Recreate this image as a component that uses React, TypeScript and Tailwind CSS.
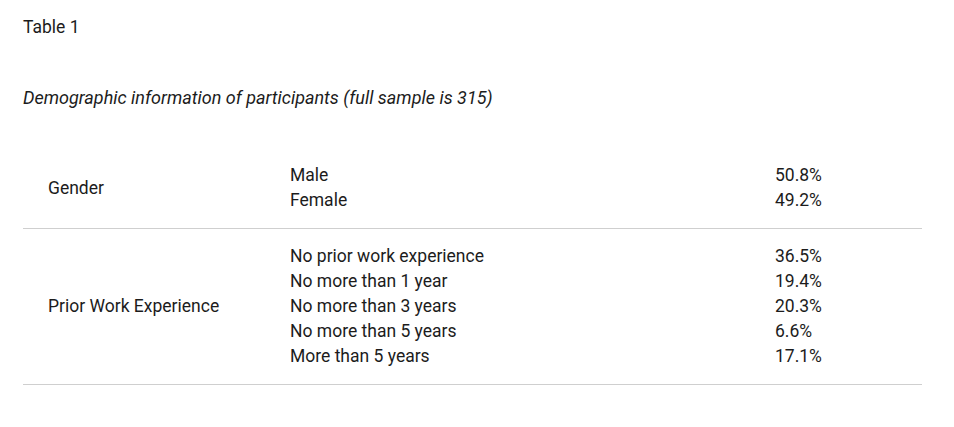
const rows = [
  {
    label: 'Gender',
    items: [
      ['Male', '50.8%'],
      ['Female', '49.2%'],
    ],
  },
  {
    label: 'Prior Work Experience',
    items: [
      ['No prior work experience', '36.5%'],
      ['No more than 1 year', '19.4%'],
      ['No more than 3 years', '20.3%'],
      ['No more than 5 years', '6.6%'],
      ['More than 5 years', '17.1%'],
    ],
  },
];

export default function App() {
  return (
    <div className="min-h-screen bg-white text-[17.5px] leading-[25px] text-[#1c1c1c] font-['Roboto',sans-serif]">
      <div className="w-[899px] ml-[23px] pt-[15px]">
        <p>Table 1</p>
        <p className="mt-[45px] italic text-[18px]">Demographic information of participants (full sample is 315)</p>

        <div className="mt-[38px]">
          {rows.map((row) => (
            <div
              key={row.label}
              className="grid grid-cols-[242px_485px_1fr] py-[15px] border-b border-[#cfcfcf]"
            >
              <div className="pl-[25px] flex items-center">{row.label}</div>
              <div className="pl-[25px]">
                {row.items.map(([name]) => (
                  <div key={name}>{name}</div>
                ))}
              </div>
              <div className="pl-[25px]">
                {row.items.map(([name, pct]) => (
                  <div key={name}>{pct}</div>
                ))}
              </div>
            </div>
          ))}
        </div>
      </div>
    </div>
  );
}
